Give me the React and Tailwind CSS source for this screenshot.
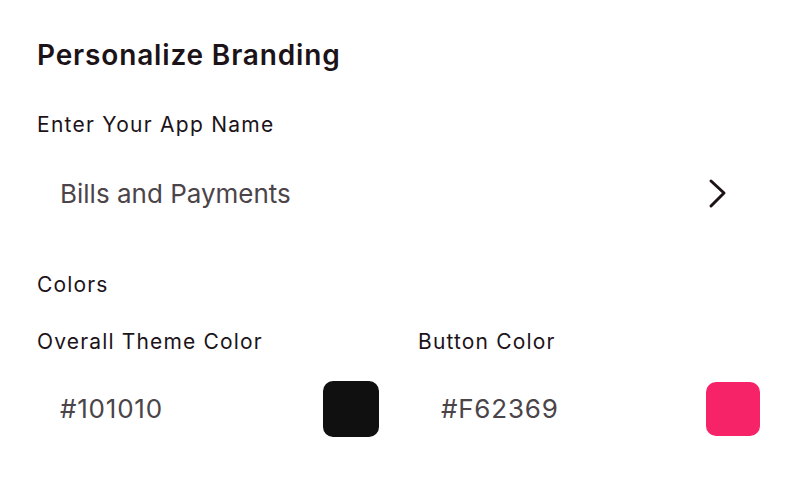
export default function App() {
  return (
    <div
      className="w-[806px] h-[494px] bg-white text-[#1c1319] px-[37px] pt-[37px]"
      style={{ fontFamily: "Inter, 'Noto Sans', sans-serif" }}
    >
      <h1 className="text-[28px] leading-9 font-semibold tracking-[0.03em]">Personalize Branding</h1>

      <div className="mt-[38px] text-[21px] leading-7 tracking-[0.06em]">Enter Your App Name</div>
      <div className="mt-[23px] flex items-center justify-between pl-[23px] pr-[41px] py-4">
        <span className="text-[26px] leading-8 text-[#4b4449]">Bills and Payments</span>
        <svg width="20" height="32" viewBox="0 0 20 32" fill="none">
          <path d="M3 3 L16 15 L3 28" stroke="#1c1319" strokeWidth="3" strokeLinecap="round" strokeLinejoin="round" />
        </svg>
      </div>

      <div className="mt-[45px] text-[21px] leading-7 tracking-[0.055em]">Colors</div>

      <div className="mt-[29px] grid grid-cols-2 gap-[27px] w-[735px]">
        <ColorField label="Overall Theme Color" value="#101010" swatch="bg-[#101010] w-[56px] h-[56px]" />
        <ColorField label="Button Color" value="#F62369" swatch="bg-[#f62369] w-[54px] h-[54px]" />
      </div>
    </div>
  );
}

function ColorField({ label, value, swatch }) {
  return (
    <div>
      <div className="text-[21px] leading-7 tracking-[0.055em]">{label}</div>
      <div className="mt-[25px] h-[56px] flex items-center justify-between pl-[23px] pr-[12px]">
        <span className="text-[26px] leading-8 tracking-[0.03em] text-[#4b4449]">{value}</span>
        <div className={`${swatch} rounded-[10px]`} />
      </div>
    </div>
  );
}
